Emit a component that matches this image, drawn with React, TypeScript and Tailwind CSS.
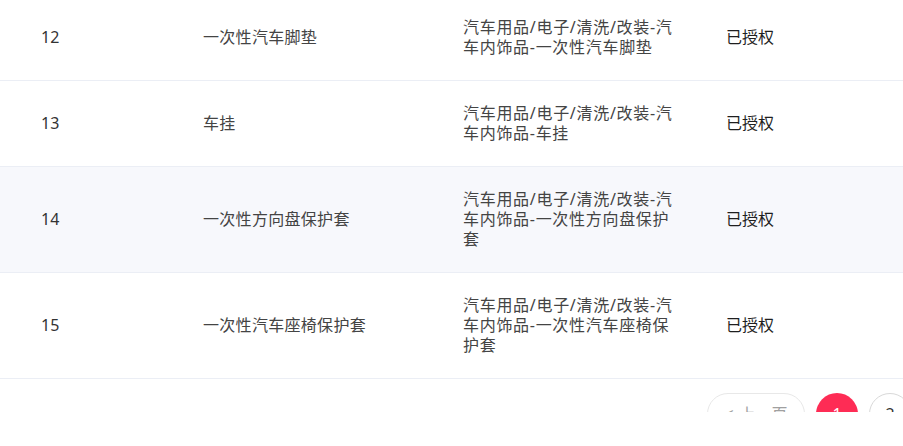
import React from "react";

const rows = [
  { id: "12", name: "一次性汽车脚垫", cat: ["汽车用品/电子/清洗/改装-汽", "车内饰品-一次性汽车脚垫"], hl: false },
  { id: "13", name: "车挂", cat: ["汽车用品/电子/清洗/改装-汽", "车内饰品-车挂"], hl: false },
  { id: "14", name: "一次性方向盘保护套", cat: ["汽车用品/电子/清洗/改装-汽", "车内饰品-一次性方向盘保护", "套"], hl: true },
  { id: "15", name: "一次性汽车座椅保护套", cat: ["汽车用品/电子/清洗/改装-汽", "车内饰品-一次性汽车座椅保", "护套"], hl: false },
];

export default function App() {
  return (
    <div
      className="w-[903px] h-[446px] bg-white overflow-hidden"
      style={{ fontFamily: '"Noto Sans", "Noto Sans CJK SC", sans-serif' }}
    >
      <div className="h-[412px] overflow-hidden">
        <div className="mt-[-5px]">
          {rows.map((r) => (
            <div
              key={r.id}
              className={`grid grid-cols-[162px_260px_263px_1fr] items-center pt-[22px] pb-[23px] border-b border-[#ebeef5] text-[16px] leading-[20px] ${
                r.hl ? "bg-[#f7f8fc]" : "bg-white"
              }`}
            >
              <div className="pl-[41px] text-[#333333]">{r.id}</div>
              <div className="pl-[41px] text-[#444444] tracking-[0.3px]">{r.name}</div>
              <div className="pl-[41px]">
                <div className="text-[#444444] tracking-[0.7px] whitespace-nowrap">
                  {r.cat.map((l, i) => (
                    <div key={i}>{l}</div>
                  ))}
                </div>
              </div>
              <div className="pl-[41px] text-[#1f1f1f]">已授权</div>
            </div>
          ))}
        </div>
        <div className="flex items-center gap-[11px] ml-[707px] mt-[14px] w-[400px]">
          <div className="h-[42px] w-[98px] shrink-0 rounded-full border border-[#e8e8e8] flex items-center justify-center gap-[6px] text-[16px] text-[#a0a0a0]">
            <span>&lt;</span>
            <span>上一页</span>
          </div>
          <div className="h-[42px] w-[42px] shrink-0 rounded-full bg-[#fe2c55] text-white flex items-center justify-center text-[16px]">
            1
          </div>
          <div className="h-[42px] w-[42px] shrink-0 rounded-full border border-[#d9d9d9] text-[#333333] flex items-center justify-center text-[16px]">
            2
          </div>
        </div>
      </div>
    </div>
  );
}
